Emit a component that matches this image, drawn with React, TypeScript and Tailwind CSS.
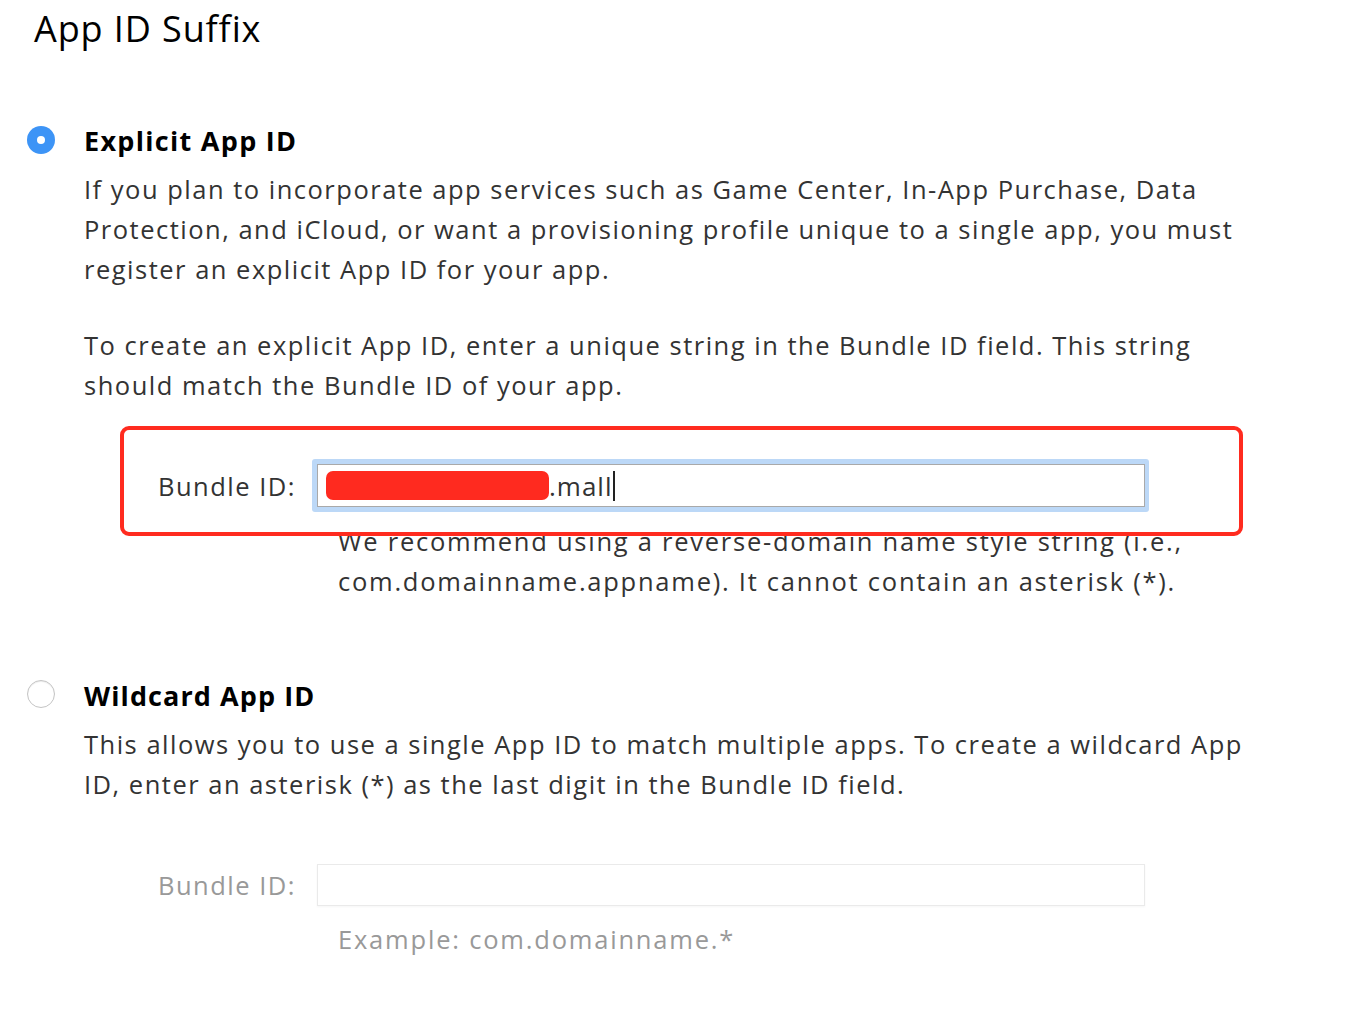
import React from "react";

const FONT = "font-['Open_Sans','Noto_Sans',sans-serif]";

function Radio({ checked }: { checked?: boolean }) {
  if (checked) {
    return (
      <span className="flex h-[28px] w-[28px] items-center justify-center rounded-full bg-[#3d94f6]">
        <span className="h-[8px] w-[8px] rounded-full bg-white" />
      </span>
    );
  }
  return (
    <span className="block h-[28px] w-[28px] rounded-full border border-[#c4c4c4] bg-white shadow-[inset_0_1px_1px_rgba(0,0,0,0.08)]" />
  );
}

export default function App() {
  return (
    <main className={`min-h-screen w-[1356px] bg-white text-[#333] ${FONT}`}>
      <div className="pl-[34px] pt-[6px]">
        <h1 className="text-[36px] leading-[46px] font-normal tracking-[0.9px] text-black">App ID Suffix</h1>
      </div>

      {/* explicit */}
      <section className="mt-[69px] flex">
        <div className="flex w-[84px] justify-start pl-[27px] pt-[5px]">
          <Radio checked />
        </div>
        <div className="flex-1">
          <h2 className="text-[27px] leading-[40px] font-bold tracking-[1.3px] text-black">Explicit App ID</h2>
          <div className="mt-[8px] text-[25.5px] leading-[40px] tracking-[1.5px]">
            <p>
              If you plan to incorporate app services such as Game Center, In-App Purchase, Data
              <br />
              Protection, and iCloud, or want a provisioning profile unique to a single app, you must
              <br />
              register an explicit App ID for your app.
            </p>
            <p className="mt-[36px]">
              To create an explicit App ID, enter a unique string in the Bundle ID field. This string
              <br />
              should match the Bundle ID of your app.
            </p>
          </div>
        </div>
      </section>

      <div className="relative mt-[54px]">
        <div className="flex items-center">
          <label className="w-[312px] pr-[16px] text-right text-[25.5px] leading-[40px] tracking-[1.5px] text-[#333]">
            Bundle ID:
          </label>
          <div className="rounded-[3px] bg-[#bcd8f7] p-[5px] pr-[4px]">
            <div className="flex h-[43px] w-[828px] items-center border border-[#a9a9a9] bg-white pl-[8px]">
              <span className="h-[29px] w-[223px] rounded-[7px] bg-[#ff2a1f]" />
              <span className="text-[26px] leading-[40px] tracking-[1px] text-[#333]">.mall</span>
              <span className="ml-[1px] h-[30px] w-[2px] bg-[#222]" />
            </div>
          </div>
        </div>
        <p className="ml-[338px] mt-[9px] text-[25.5px] leading-[40px] tracking-[1.75px]">
          We recommend using a reverse-domain name style string (i.e.,
          <br />
          com.domainname.appname). It cannot contain an asterisk (*).
        </p>
        <div className="pointer-events-none absolute left-[120px] top-[-33px] h-[110px] w-[1123px] rounded-[9px] border-[4px] border-[#ff2b1f]" />
      </div>

      {/* wildcard */}
      <section className="mt-[75px] flex">
        <div className="flex w-[84px] justify-start pl-[27px] pt-[4px]">
          <Radio />
        </div>
        <div className="flex-1">
          <h2 className="text-[27px] leading-[40px] font-bold tracking-[1.1px] text-black">Wildcard App ID</h2>
          <p className="mt-[8px] text-[25.5px] leading-[40px] tracking-[1.5px]">
            This allows you to use a single App ID to match multiple apps. To create a wildcard App
            <br />
            ID, enter an asterisk (*) as the last digit in the Bundle ID field.
          </p>
        </div>
      </section>

      <div className="mt-[60px] flex items-center">
        <label className="w-[317px] pr-[21px] text-right text-[25.5px] leading-[40px] tracking-[1.5px] text-[#999]">
          Bundle ID:
        </label>
        <div className="h-[42px] w-[828px] border border-[#eaeaea] bg-white shadow-[0_1px_2px_rgba(0,0,0,0.04)]" />
      </div>
      <p className="ml-[338px] mt-[13px] text-[25.5px] leading-[40px] tracking-[1.8px] text-[#999]">
        Example: com.domainname.*
      </p>
    </main>
  );
}
